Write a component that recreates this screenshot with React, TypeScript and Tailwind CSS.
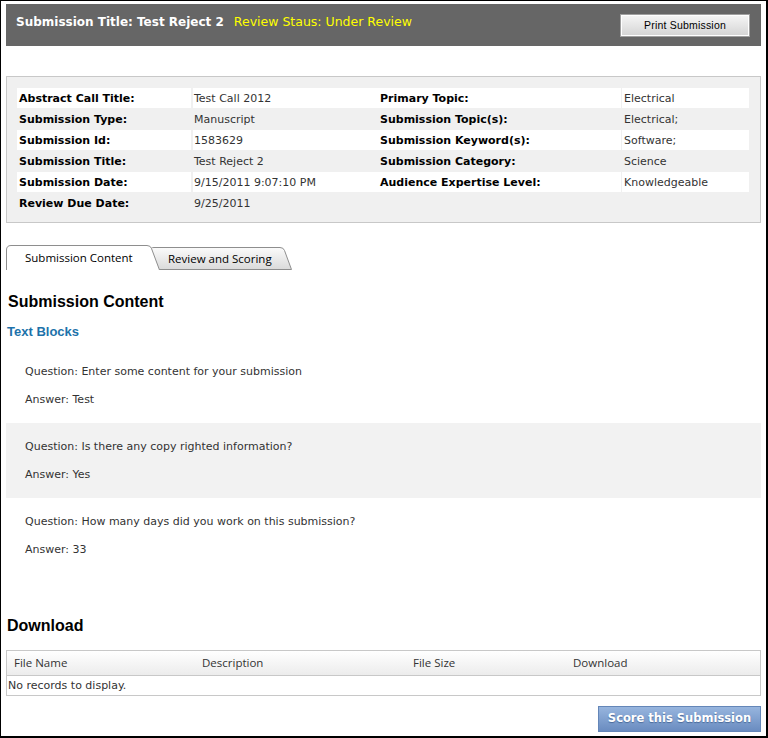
import React from "react";

const verdana = { fontFamily: '"DejaVu Sans", Verdana, sans-serif' };

type Row = { l1: string; v1: string; l2: string; v2: string; white: boolean };

const rows: Row[] = [
  { l1: "Abstract Call Title:", v1: "Test Call 2012", l2: "Primary Topic:", v2: "Electrical", white: true },
  { l1: "Submission Type:", v1: "Manuscript", l2: "Submission Topic(s):", v2: "Electrical;", white: false },
  { l1: "Submission Id:", v1: "1583629", l2: "Submission Keyword(s):", v2: "Software;", white: true },
  { l1: "Submission Title:", v1: "Test Reject 2", l2: "Submission Category:", v2: "Science", white: false },
  { l1: "Submission Date:", v1: "9/15/2011 9:07:10 PM", l2: "Audience Expertise Level:", v2: "Knowledgeable", white: true },
  { l1: "Review Due Date:", v1: "9/25/2011", l2: "", v2: "", white: false },
];

const qa = [
  { q: "Question: Enter some content for your submission", a: "Answer: Test", alt: false },
  { q: "Question: Is there any copy righted information?", a: "Answer: Yes", alt: true },
  { q: "Question: How many days did you work on this submission?", a: "Answer: 33", alt: false },
];

export default function App() {
  return (
    <div
      className="w-[768px] h-[738px] box-border border-l border-t border-r-2 border-b-2 border-black bg-white pl-[5px] pr-[5px] pt-[3px] text-[11px] text-[#333]"
      style={verdana}
    >
      {/* Header */}
      <div className="h-[42px] bg-[#666666] flex items-start justify-between">
        <div className="pt-[10px] pl-[10px] leading-[16px] flex items-baseline">
          <span className="font-bold text-white text-[12px]">Submission Title: Test Reject 2</span>
          <span className="ml-[10px] text-[#ffff00] text-[12.5px]">Review Staus: Under Review</span>
        </div>
        <button
          className="mt-[10px] mr-[11px] w-[130px] h-[23px] border border-[#a0a0a0] bg-gradient-to-b from-[#f6f6f6] to-[#d4d4d4] text-[10.5px] text-black tracking-[0.2px] shadow-[inset_0_0_0_1px_#ffffff]"
          style={{ fontFamily: '"Liberation Sans", Arial, sans-serif' }}
        >
          Print Submission
        </button>
      </div>

      {/* Info panel */}
      <div className="mt-[30px] h-[147px] box-border border border-[#c8c8c8] bg-[#f0f0f0] pt-[11px] pl-[10px]">
        {rows.map((r, i) => (
          <div key={i} className="flex h-[21px] items-stretch">
            <div className={`w-[174px] pl-[2px] font-bold text-black leading-[21px] h-[20px] ${r.white ? "bg-white" : ""}`}>{r.l1}</div>
            <div className="w-[2px]" />
            <div className={`w-[184px] pl-[1px] text-[#333] leading-[21px] h-[20px] ${r.white ? "bg-white" : ""}`}>{r.v1}</div>
            <div className={`w-[244px] pl-[3px] font-bold text-black leading-[21px] h-[20px] ${r.white ? "bg-white" : ""}`}>{r.l2}</div>
            <div className="w-[1px]" />
            <div className={`w-[127px] pl-[2px] text-[#333] leading-[21px] h-[20px] ${r.white ? "bg-white" : ""}`}>{r.v2}</div>
          </div>
        ))}
      </div>

      {/* Tabs */}
      <div className="mt-[22px] h-[25px] flex items-end" style={{ fontFamily: '"Open Sans", "Segoe UI", sans-serif' }}>
        <div className="relative z-10 w-[154px] h-[25px]">
          <svg className="absolute inset-0" width="154" height="25" viewBox="0 0 154 25">
            <path d="M0.5,25 L0.5,5 Q0.5,0.5 5,0.5 L141,0.5 Q144.5,0.5 145.5,3.5 L153.5,25" fill="#ffffff" stroke="#8e8e8e" strokeWidth="1" />
          </svg>
          <div className="relative pl-[19px] pt-[4px] text-[11.5px] leading-[17px] text-black">Submission Content</div>
        </div>
        <div className="relative -ml-[10px] w-[142px] h-[23px]">
          <svg className="absolute inset-0" width="142" height="23" viewBox="0 0 142 23">
            <defs>
              <linearGradient id="tab2g" x1="0" y1="0" x2="0" y2="1">
                <stop offset="0" stopColor="#fbfbfb" />
                <stop offset="1" stopColor="#dadada" />
              </linearGradient>
            </defs>
            <path d="M7,22.5 L1,3.5 Q0,0.5 4,0.5 L130,0.5 Q133.5,0.5 134.5,3.5 L141.5,22.5 Z" fill="url(#tab2g)" stroke="#8e8e8e" strokeWidth="1" />
          </svg>
          <div className="relative pl-[18px] pt-[3px] text-[11.5px] leading-[17px] text-black">Review and Scoring</div>
        </div>
      </div>

      {/* Submission content */}
      <div style={{ fontFamily: '"Liberation Sans", Arial, sans-serif' }}>
        <div className="mt-[23px] ml-[2px] text-[16px] leading-[18px] font-bold text-black">Submission Content</div>
        <div className="mt-[13px] ml-[1px] text-[13px] leading-[16px] font-bold text-[#1d72aa]">Text Blocks</div>
      </div>

      <div className="mt-[8px]">
        {qa.map((b, i) => (
          <div key={i} className={`h-[75px] pl-[19px] pt-[17px] ${b.alt ? "bg-[#f2f2f2]" : ""}`}>
            <div className="leading-[14px]">{b.q}</div>
            <div className="mt-[14px] leading-[14px]">{b.a}</div>
          </div>
        ))}
      </div>

      {/* Download */}
      <div
        className="mt-[44px] ml-[1px] text-[16px] leading-[18px] font-bold text-black"
        style={{ fontFamily: '"Liberation Sans", Arial, sans-serif' }}
      >
        Download
      </div>
      <div className="mt-[15px] border border-[#c8c8c8]">
        <div
          className="h-[25px] flex items-center bg-gradient-to-b from-[#ffffff] to-[#ececec] border-b border-[#c8c8c8] text-[11.5px] text-[#333]"
          style={{ fontFamily: '"Open Sans", "Segoe UI", sans-serif' }}
        >
          <div className="w-[195px] pl-[7px]">File Name</div>
          <div className="w-[211px]">Description</div>
          <div className="w-[160px]">File Size</div>
          <div>Download</div>
        </div>
        <div className="h-[19px] leading-[19px] pl-[1px]">No records to display.</div>
      </div>

      <div className="mt-[10px] flex justify-end">
        <button className="w-[163px] h-[26px] border border-[#6486b8] bg-gradient-to-b from-[#97b5de] to-[#6a8cc0] text-white font-bold text-[11.5px] [text-shadow:0_1px_1px_#4a6a9a]">
          Score this Submission
        </button>
      </div>
    </div>
  );
}
